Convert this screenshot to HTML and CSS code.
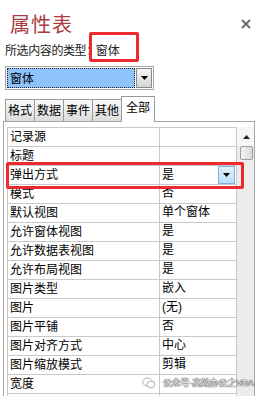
FILE: index.html
```html
<!DOCTYPE html>
<html lang="zh">
<head>
<meta charset="utf-8">
<title>属性表</title>
<link rel="stylesheet" href="styles.css">
</head>
<body>
<div class="sheet">
  <div class="head">
    <div class="title">属性表</div>
    <svg class="close" width="10" height="10" viewBox="0 0 10 10"><path d="M1 1L9 9M9 1L1 9" stroke="#6d6d6d" stroke-width="2"/></svg>
  </div>
  <div class="sub">所选内容的类型：<span class="subval">窗体</span></div>
  <div class="combo">
    <div class="combo-field"><span class="combo-text">窗体</span></div>
    <div class="combo-btn"><svg width="7" height="4" viewBox="0 0 7 4"><path d="M0 0H7L3.5 4Z" fill="#000"/></svg></div>
  </div>
  <div class="tabs">
    <div class="tab">格式</div>
    <div class="tab">数据</div>
    <div class="tab">事件</div>
    <div class="tab">其他</div>
    <div class="tab active">全部</div>
  </div>
  <div class="panel">
    <div class="grid">
      <div class="row"><div class="k">记录源</div><div class="v"></div></div>
      <div class="row"><div class="k">标题</div><div class="v"></div></div>
      <div class="row"><div class="k">弹出方式</div><div class="v v-drop"><span>是</span><span class="drop-btn"><svg width="7" height="4" viewBox="0 0 7 4"><path d="M0 0H7L3.5 4Z" fill="#000"/></svg></span></div></div>
      <div class="row"><div class="k">模式</div><div class="v">否</div></div>
      <div class="row"><div class="k">默认视图</div><div class="v">单个窗体</div></div>
      <div class="row"><div class="k">允许窗体视图</div><div class="v">是</div></div>
      <div class="row"><div class="k">允许数据表视图</div><div class="v">是</div></div>
      <div class="row"><div class="k">允许布局视图</div><div class="v">是</div></div>
      <div class="row"><div class="k">图片类型</div><div class="v">嵌入</div></div>
      <div class="row"><div class="k">图片</div><div class="v">(无)</div></div>
      <div class="row"><div class="k">图片平铺</div><div class="v">否</div></div>
      <div class="row"><div class="k">图片对齐方式</div><div class="v">中心</div></div>
      <div class="row"><div class="k">图片缩放模式</div><div class="v">剪辑</div></div>
      <div class="row"><div class="k">宽度</div><div class="v"></div></div>
      <div class="row"><div class="k"></div><div class="v"></div></div>
    </div>
    <div class="scroll">
      <div class="sc-up"><svg width="7" height="4" viewBox="0 0 7 4"><path d="M0 4H7L3.5 0Z" fill="#222"/></svg></div>
      <div class="sc-thumb"></div>
      <div class="sc-track"></div>
    </div>
  </div>
  <div class="mark mark-type"></div>
  <div class="mark mark-row"></div>
  <div class="watermark">
    <svg class="wm-icon" width="14" height="12" viewBox="0 0 14 12"><ellipse cx="5.5" cy="5" rx="4.8" ry="4" fill="none" stroke="#9a9a9a" stroke-width="0.8"/><ellipse cx="9" cy="7.5" rx="4" ry="3.3" fill="#fff" stroke="#9a9a9a" stroke-width="0.8"/></svg>
    <span class="wm-text">公众号·高效办公之VBA</span>
  </div>
</div>
</body>
</html>
```

FILE: styles.css
```css
* { box-sizing: border-box; }
html, body { margin: 0; padding: 0; background: #fff; }
body {
  font-family: "Liberation Sans", "Noto Sans CJK SC", sans-serif;
  font-size: 12px;
  color: #000;
}
.sheet {
  position: relative;
  width: 263px;
  height: 396px;
  overflow: hidden;
  background: #fff;
}
.head {
  display: flex;
  justify-content: space-between;
  align-items: flex-start;
  padding: 12px 12px 0 10px;
}
.title {
  font-family: "Noto Sans CJK SC", sans-serif;
  font-size: 20px;
  line-height: 24px;
  color: #a93a3e;
  letter-spacing: 1px;
}
.close { margin-top: 7px; }
.sub {
  margin-top: 6px;
  padding-left: 5px;
  font-family: "Noto Sans CJK SC", sans-serif;
  font-size: 12px;
  line-height: 16px;
  color: #222;
  letter-spacing: -0.4px;
}
.subval { margin-left: -2px; letter-spacing: 0; }
.combo {
  display: flex;
  margin: 8px 0 0 5px;
  width: 149px;
  height: 24px;
  border: 1px solid #a6a6a6;
  padding: 1px;
  background: #fff;
}
.combo-field {
  flex: 1;
  background: #8fc3fc;
  border: 1px dotted #222;
  display: flex;
  align-items: center;
  padding-left: 2px;
}
.combo-text {
  font-family: "Noto Sans CJK SC", sans-serif;
  font-size: 12px;
  line-height: 14px;
}
.combo-btn {
  width: 16px;
  margin-left: 1px;
  border: 1px solid #8a8a8a;
  background: linear-gradient(#f4f4f4, #d6d6d6);
  display: flex;
  align-items: center;
  justify-content: center;
}
.tabs {
  display: flex;
  align-items: flex-end;
  height: 25px;
  margin-top: 6px;
  padding-left: 5px;
}
.tab {
  height: 22px;
  padding: 0 2px;
  border: 1px solid #9a9a9a;
  border-bottom: none;
  background: linear-gradient(#fafafa, #dcdcdc);
  font-family: "Noto Sans CJK SC", sans-serif;
  font-size: 12px;
  line-height: 20px;
  letter-spacing: 0;
}
.tab + .tab { margin-left: -1px; }
.tab.active {
  position: relative;
  z-index: 1;
  height: 26px;
  margin-bottom: -1px;
  padding: 0 4px;
  background: #fff;
  line-height: 20px;
}
.panel {
  display: flex;
  align-items: flex-start;
  margin-left: 3px;
  width: 252px;
  height: 300px;
  border: 1px solid #a6a6a6;
  border-bottom: none;
  padding: 5px 0 0 3px;
}
.grid {
  width: 230px;
  border-top: 1px solid #c9c9c9;
  border-left: 1px solid #c9c9c9;
}
.row {
  display: flex;
  height: 19px;
  border-bottom: 1px solid #c9c9c9;
}
.k, .v {
  font-family: "Noto Sans CJK SC", sans-serif;
  font-size: 12px;
  line-height: 16px;
  padding: 0 0 2px 2px;
  white-space: nowrap;
  overflow: hidden;
  display: flex;
  align-items: center;
}
.k { width: 152px; border-right: 1px solid #c9c9c9; }
.v { width: 77px; border-right: 1px solid #c9c9c9; font-family: "Liberation Sans", "Noto Sans CJK SC", sans-serif; }
.v-drop { justify-content: space-between; padding-right: 1px; padding-bottom: 0; }
.v-drop span:first-child { padding-bottom: 2px; font-family: "Noto Sans CJK SC", sans-serif; }
.drop-btn {
  width: 17px;
  height: 18px;
  border: 1px solid #7fb1e0;
  background: linear-gradient(#e4f1fb, #bcdcf4);
  display: flex;
  align-items: center;
  justify-content: center;
}
.scroll {
  width: 17px;
  height: 295px;
  display: flex;
  flex-direction: column;
  background: #ececec;
}
.sc-up {
  height: 19px;
  background: #f6f6f6;
  display: flex;
  align-items: center;
  justify-content: center;
  padding-left: 2px;
}
.sc-thumb {
  margin: 0 1px 0 3px;
  height: 14px;
  border: 1px solid #9c9c9c;
  border-radius: 2px;
  background: linear-gradient(90deg, #f2f2f2, #d9d9d9);
}
.sc-track { flex: 1; }
.mark {
  position: absolute;
  border: 3px solid #ee2a2f;
  border-radius: 2px;
}
.mark-type { left: 89px; top: 32px; width: 50px; height: 30px; }
.mark-row { left: 6px; top: 162px; width: 238px; height: 27px; }
.watermark {
  position: absolute;
  left: 142px;
  top: 376px;
  display: flex;
  align-items: center;
  gap: 7px;
  white-space: nowrap;
}
.wm-text {
  font-family: "Liberation Sans", "Noto Sans CJK SC", sans-serif;
  font-size: 9px;
  line-height: 14px;
  letter-spacing: -0.2px;
  color: #fff;
  text-shadow: 0 0 1px #333, 0 0 1px #333, 0 0 1px #555;
}
```
